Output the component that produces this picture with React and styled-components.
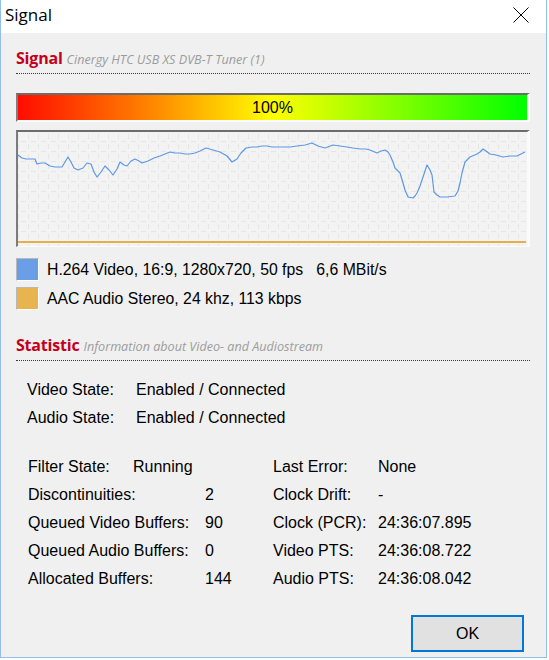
import React from 'react'
import styled, { createGlobalStyle } from 'styled-components'

const GlobalStyle = createGlobalStyle`
  html, body {
    margin: 0;
    padding: 0;
    background: #ffffff;
  }
  body {
    font-family: "Liberation Sans", Arial, sans-serif;
  }
`

const Window = styled.div`
  width: 547px;
  height: 658px;
  box-sizing: border-box;
  border: 1px solid #8fbfea;
  border-top: none;
  display: flex;
  flex-direction: column;
  background: #f0f0f0;
`

const TitleBar = styled.div`
  height: 33px;
  flex: none;
  background: #ffffff;
  display: flex;
  align-items: flex-start;
  justify-content: space-between;
  padding: 0 17px 0 4px;
`

const TitleText = styled.span`
  font-family: "Open Sans", "Noto Sans", sans-serif;
  font-size: 17px;
  line-height: 30px;
  color: #000;
`

const CloseIcon = styled.svg`
  margin-top: 7px;
  display: block;
`

const Body = styled.div`
  flex: 1;
  display: flex;
  flex-direction: column;
  padding: 0 16px 0 15px;
`

const SectionHeader = styled.div`
  margin-top: ${p => p.$top}px;
  padding-bottom: 3px;
  border-bottom: 1px dotted #3a3a3a;
  display: flex;
  align-items: baseline;
  gap: 4px;
  line-height: 20px;
  font-family: "Open Sans", "Noto Sans", sans-serif;
`

const HeaderTitle = styled.span`
  font-size: 16px;
  font-weight: 700;
  color: #c4001c;
  letter-spacing: -0.2px;
`

const HeaderSub = styled.span`
  font-size: 12.6px;
  font-style: italic;
  color: #9c9c9c;
`

const LevelBar = styled.div`
  margin-top: 19px;
  height: 29px;
  box-sizing: border-box;
  border-style: solid;
  border-width: 2px 3px 2px 2px;
  border-color: #6c6c6c #fbfbfb #fbfbfb #7c7c7c;
  background: linear-gradient(to right, #ff0c00 0%, #ff8000 25%, #ffff00 50%, #80ff00 75%, #00ff00 100%);
  display: flex;
  align-items: center;
  justify-content: center;
  font-size: 16px;
  color: #000;
`

const Chart = styled.div`
  margin-top: 8px;
  height: 117px;
  box-sizing: border-box;
  border-style: solid;
  border-width: 2px 3px 1px 2px;
  border-color: #6c6c6c #fbfbfb #fbfbfb #7c7c7c;
  background: #f3f3f3;

  svg {
    display: block;
  }
`

const Legend = styled.div`
  margin-top: 11px;
  display: flex;
  flex-direction: column;
  gap: 6px;
`

const LegendRow = styled.div`
  display: flex;
  align-items: center;
  gap: 8px;
  height: 23px;
  font-size: 15.8px;
  color: #000;
`

const Swatch = styled.span`
  width: 23px;
  height: 23px;
  box-sizing: border-box;
  background: ${p => p.$color};
  border-style: solid;
  border-width: 1px;
  border-color: #b8b8b8 #fdfdfd #fdfdfd #b8b8b8;
  flex: none;
`

const StateBlock = styled.div`
  margin-top: 15px;
  padding-left: 11px;
  display: flex;
  flex-direction: column;
`

const Row = styled.div`
  display: flex;
  height: 28px;
  line-height: 28px;
  font-size: 16px;
  color: #000;
  white-space: nowrap;
`

const Label = styled.span`
  width: ${p => p.$w}px;
  flex: none;
`

const StatsGrid = styled.div`
  margin-top: 21px;
  padding-left: 12px;
  display: grid;
  grid-template-columns: 245px 1fr;
`

const Column = styled.div`
  display: flex;
  flex-direction: column;
`

const Footer = styled.div`
  margin-top: 22px;
  display: flex;
  justify-content: flex-end;
  padding-right: 6px;
`

const OkButton = styled.button`
  width: 113px;
  height: 37px;
  box-sizing: border-box;
  border: 2px solid #0078d7;
  background: #e1e1e1;
  font-family: "Liberation Sans", Arial, sans-serif;
  font-size: 16px;
  color: #000;
  padding: 0;
`

const trace = [
  [18, 155], [22, 158], [26, 159], [30, 159], [35, 159], [37, 164], [41, 163], [45, 163],
  [50, 166], [55, 167], [62, 167], [65, 162], [68, 157], [71, 162], [74, 168], [78, 170],
  [83, 168], [87, 163], [91, 164], [94, 172], [97, 177], [101, 172], [105, 166], [109, 170],
  [113, 175], [117, 169], [120, 162], [124, 165], [127, 166], [131, 161], [135, 159], [139, 161],
  [142, 163], [148, 161], [154, 158], [160, 156], [165, 154], [170, 152], [175, 153], [180, 153],
  [185, 154], [190, 154], [195, 153], [200, 151], [206, 148], [213, 150], [220, 152], [227, 156],
  [232, 162], [237, 159], [241, 153], [246, 148], [252, 147], [257, 147], [262, 146], [267, 146],
  [272, 147], [277, 147], [283, 147], [290, 147], [297, 146], [305, 145], [312, 143], [318, 146],
  [325, 148], [333, 145], [340, 146], [347, 147], [353, 148], [360, 149], [366, 149], [370, 150],
  [377, 153], [381, 151], [385, 150], [388, 152], [390, 155], [393, 162], [395, 168], [398, 171],
  [400, 173], [403, 183], [405, 190], [408, 197], [413, 198], [415, 196], [417, 193], [420, 186],
  [422, 180], [425, 171], [427, 165], [430, 170], [432, 175], [434, 192], [437, 195], [440, 197],
  [447, 197], [455, 196], [458, 191], [460, 183], [462, 173], [465, 162], [470, 157], [477, 154],
  [480, 152], [483, 149], [486, 151], [490, 154], [496, 155], [503, 157], [510, 156], [517, 156],
  [521, 154], [525, 152]
]

function SignalChart() {
  return (
    <Chart>
      <svg width="508" height="114" viewBox="18 132 508 114">
        <defs>
          <pattern id="grid" width="10" height="10" x="28" y="131" patternUnits="userSpaceOnUse">
            <path d="M3 0.5 H8 M0.5 3 V8" stroke="#e6e6e6" strokeWidth="1" fill="none" />
          </pattern>
        </defs>
        <rect x="18" y="132" width="508" height="114" fill="url(#grid)" />
        <line x1="18" y1="242" x2="526" y2="242" stroke="#e8ae4c" strokeWidth="2" />
        <polyline
          points={trace.map(p => p.join(',')).join(' ')}
          fill="none"
          stroke="#5c98e8"
          strokeWidth="1.2"
          strokeLinejoin="round"
        />
      </svg>
    </Chart>
  )
}

export default function App() {
  return (
    <>
      <GlobalStyle />
      <Window>
        <TitleBar>
          <TitleText>Signal</TitleText>
          <CloseIcon width="16" height="16" viewBox="0 0 16 16">
            <path d="M0.5 0.5 L15.5 15.5 M15.5 0.5 L0.5 15.5" stroke="#000" strokeWidth="1" fill="none" />
          </CloseIcon>
        </TitleBar>
        <Body>
          <SectionHeader $top={15}>
            <HeaderTitle>Signal</HeaderTitle>
            <HeaderSub>Cinergy HTC USB XS DVB-T Tuner (1)</HeaderSub>
          </SectionHeader>

          <LevelBar>100%</LevelBar>
          <SignalChart />

          <Legend>
            <LegendRow>
              <Swatch $color="#6a9fe8" />
              <span>H.264 Video, 16:9, 1280x720, 50 fps&nbsp;&nbsp;&nbsp;6,6 MBit/s</span>
            </LegendRow>
            <LegendRow>
              <Swatch $color="#e8b44f" />
              <span>AAC Audio Stereo, 24 khz, 113 kbps</span>
            </LegendRow>
          </Legend>

          <SectionHeader $top={25}>
            <HeaderTitle>Statistic</HeaderTitle>
            <HeaderSub>Information about Video- and Audiostream</HeaderSub>
          </SectionHeader>

          <StateBlock>
            <Row><Label $w={109}>Video State:</Label><span>Enabled / Connected</span></Row>
            <Row><Label $w={109}>Audio State:</Label><span>Enabled / Connected</span></Row>
          </StateBlock>

          <StatsGrid>
            <Column>
              <Row><Label $w={105}>Filter State:</Label><span>Running</span></Row>
              <Row><Label $w={177}>Discontinuities:</Label><span>2</span></Row>
              <Row><Label $w={177}>Queued Video Buffers:</Label><span>90</span></Row>
              <Row><Label $w={177}>Queued Audio Buffers:</Label><span>0</span></Row>
              <Row><Label $w={177}>Allocated Buffers:</Label><span>144</span></Row>
            </Column>
            <Column>
              <Row><Label $w={105}>Last Error:</Label><span>None</span></Row>
              <Row><Label $w={105}>Clock Drift:</Label><span>-</span></Row>
              <Row><Label $w={105}>Clock (PCR):</Label><span>24:36:07.895</span></Row>
              <Row><Label $w={105}>Video PTS:</Label><span>24:36:08.722</span></Row>
              <Row><Label $w={105}>Audio PTS:</Label><span>24:36:08.042</span></Row>
            </Column>
          </StatsGrid>

          <Footer>
            <OkButton>OK</OkButton>
          </Footer>
        </Body>
      </Window>
    </>
  )
}
